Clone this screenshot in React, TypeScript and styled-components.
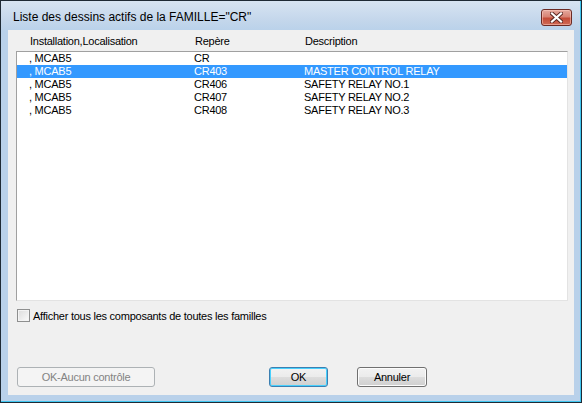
import React from "react";
import styled, { createGlobalStyle } from "styled-components";

const rows = [
  { loc: ", MCAB5", rep: "CR", desc: "" },
  { loc: ", MCAB5", rep: "CR403", desc: "MASTER CONTROL RELAY", selected: true },
  { loc: ", MCAB5", rep: "CR406", desc: "SAFETY RELAY NO.1" },
  { loc: ", MCAB5", rep: "CR407", desc: "SAFETY RELAY NO.2" },
  { loc: ", MCAB5", rep: "CR408", desc: "SAFETY RELAY NO.3" },
];

const App = () => (
  <>
    <GlobalStyle />
    <Window>
      <TitleBar>
        <Title>Liste des dessins actifs de la FAMILLE="CR"</Title>
        <CloseButton aria-label="Fermer">
          <svg width="13" height="11" viewBox="0 0 13 11">
            <path
              d="M2 1.5 L11 9.5 M11 1.5 L2 9.5"
              stroke="#5a2620"
              strokeWidth="4"
              strokeLinecap="square"
            />
            <path
              d="M2 1.5 L11 9.5 M11 1.5 L2 9.5"
              stroke="#fff"
              strokeWidth="2.2"
              strokeLinecap="square"
            />
          </svg>
        </CloseButton>
      </TitleBar>
      <Client>
        <HeaderRow>
          <span>Installation,Localisation</span>
          <span>Repère</span>
          <span>Description</span>
        </HeaderRow>
        <List>
          {rows.map((r, i) => (
            <Row key={i} $selected={r.selected}>
              <span>{r.loc}</span>
              <span>{r.rep}</span>
              <span>{r.desc}</span>
            </Row>
          ))}
        </List>
        <CheckRow>
          <CheckBox />
          <span>Afficher tous les composants de toutes les familles</span>
        </CheckRow>
        <ButtonBar>
          <Button disabled $w={138}>
            OK-Aucun contrôle
          </Button>
          <Button $w={59} $focused>
            OK
          </Button>
          <Button $w={70}>Annuler</Button>
        </ButtonBar>
      </Client>
    </Window>
  </>
);

const GlobalStyle = createGlobalStyle`
  body {
    margin: 0;
    background: #fff;
    font-family: "Liberation Sans", Arial, sans-serif;
  }
`;

const Window = styled.div`
  width: 582px;
  height: 403px;
  box-sizing: border-box;
  border: 1px solid #1e2a35;
  box-shadow: inset -1px -1px 0 #3fc6f0;
  background: linear-gradient(#d7e4f2 0px, #c3d6eb 20px, #b9d1ea 30px);
  display: flex;
  flex-direction: column;
`;

const TitleBar = styled.div`
  height: 29px;
  display: flex;
  align-items: flex-start;
  padding: 0 9px 0 12px;
`;

const Title = styled.div`
  flex: 1;
  font-size: 12px;
  line-height: 14px;
  margin-top: 9px;
  color: #000;
  white-space: nowrap;
`;

const CloseButton = styled.div`
  width: 31px;
  height: 17px;
  margin-top: 8px;
  box-sizing: border-box;
  border: 1px solid #6b2a24;
  border-radius: 3px;
  background: linear-gradient(#e5a99e 0%, #d88374 45%, #c44b38 55%, #cf6a55 100%);
  box-shadow: inset 0 0 0 1px rgba(255, 210, 200, 0.5);
  display: flex;
  align-items: center;
  justify-content: center;
`;

const Client = styled.div`
  flex: 1;
  margin: 0 7px 7px 7px;
  background: #f0f0f0;
  display: flex;
  flex-direction: column;
  font-size: 11px;
  letter-spacing: -0.25px;
  color: #000;
`;

const Columns = styled.div`
  display: grid;
  grid-template-columns: 165px 110px 1fr;
  white-space: nowrap;
`;

const HeaderRow = styled(Columns)`
  height: 21px;
  line-height: 22px;
  padding-left: 22px;
`;

const List = styled.div`
  margin: 0 6px 0 8px;
  height: 250px;
  box-sizing: border-box;
  border: 1px solid;
  border-color: #a0a0a0 #e3e3e3 #e3e3e3 #a0a0a0;
  background: #fff;
`;

const Row = styled(Columns)<{ $selected?: boolean }>`
  height: 13px;
  line-height: 13px;
  padding-left: 12px;
  background: ${(p) => (p.$selected ? "#3399ff" : "transparent")};
  color: ${(p) => (p.$selected ? "#fff" : "#000")};
`;

const CheckRow = styled.div`
  display: flex;
  align-items: center;
  gap: 3px;
  margin: 8px 0 0 9px;
  height: 13px;
  white-space: nowrap;
`;

const CheckBox = styled.div`
  width: 13px;
  height: 13px;
  box-sizing: border-box;
  border: 1px solid #8e8f8f;
  background: linear-gradient(135deg, #dcdcdc, #fbfbfb);
  box-shadow: inset 0 0 0 1px #f4f4f4;
`;

const ButtonBar = styled.div`
  margin-top: auto;
  margin-bottom: 8px;
  display: flex;
  padding-left: 9px;
  & > :nth-child(2) {
    margin-left: 114px;
  }
  & > :nth-child(3) {
    margin-left: 29px;
  }
`;

const Button = styled.button<{ $w: number; $focused?: boolean }>`
  width: ${(p) => p.$w}px;
  height: 20px;
  box-sizing: border-box;
  padding: 0;
  font-family: inherit;
  font-size: 11px;
  letter-spacing: -0.25px;
  color: #000;
  border-radius: 3px;
  border: 1px solid ${(p) => (p.$focused ? "#3c7fb1" : "#707070")};
  background: linear-gradient(#f2f2f2 0%, #ebebeb 50%, #dddddd 51%, #cfcfcf 100%);
  box-shadow: ${(p) =>
    p.$focused ? "inset 0 0 0 1px #48d0fd" : "inset 0 0 0 1px #fcfcfc"};
  &:disabled {
    color: #838383;
    border-color: #adb2b5;
    background: #f4f4f4;
    box-shadow: none;
  }
`;

export default App;
